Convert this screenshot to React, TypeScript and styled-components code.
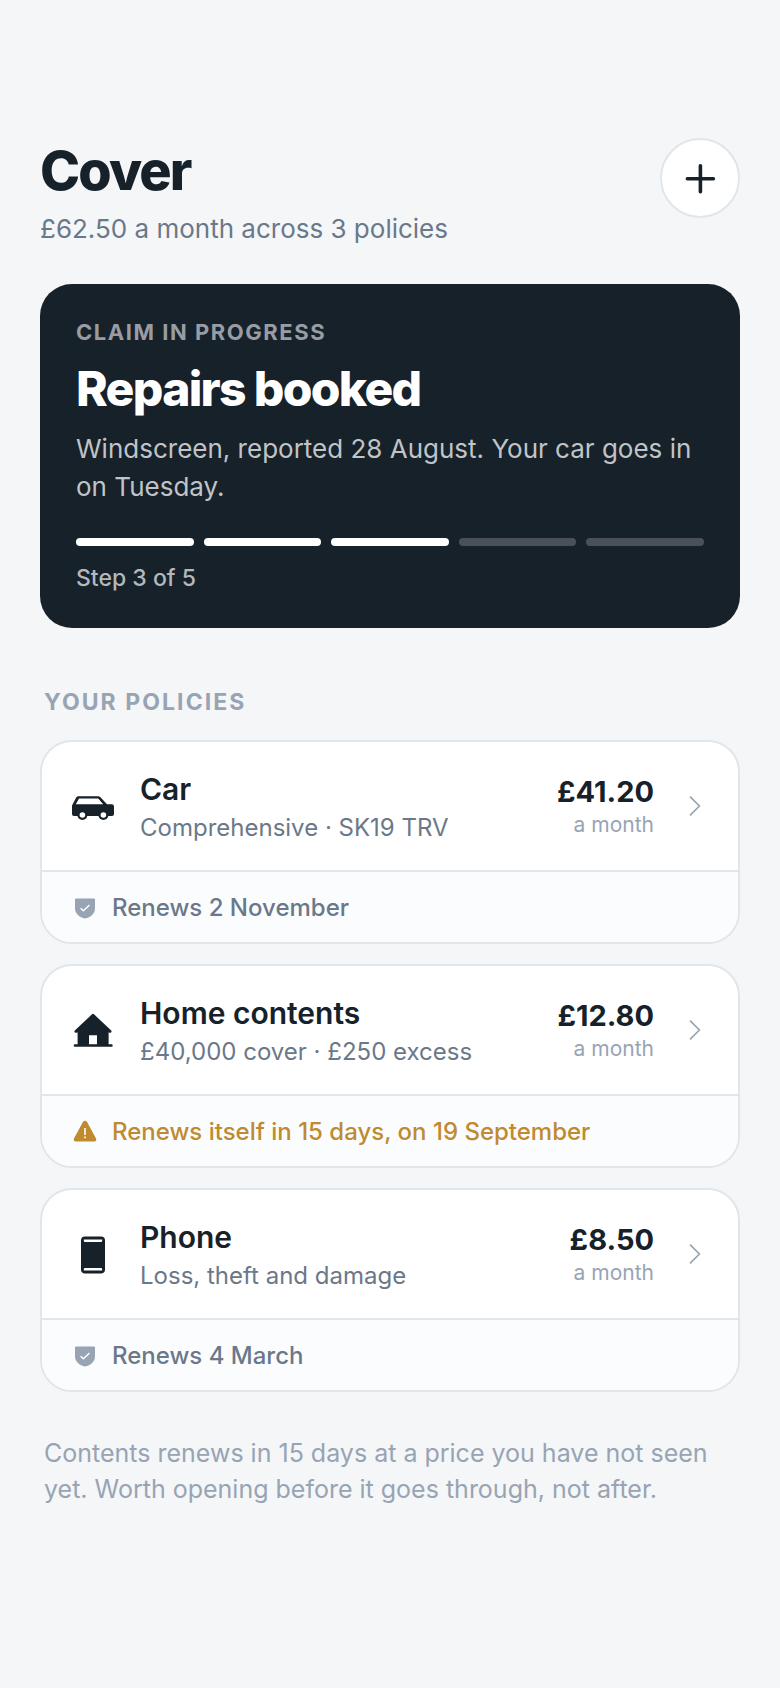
import React from "react";
import styled, { createGlobalStyle } from "styled-components";

const GlobalStyle = createGlobalStyle`
  * {
    box-sizing: border-box;
  }

  body {
    margin: 0;
    background-color: #f4f6f8;
    color: #17212a;
    font-family: Inter, "Liberation Sans", sans-serif;
  }

  h1, h2, h3, p, ul {
    margin: 0;
    padding: 0;
  }
`;

const Page = styled.main`
  min-height: 100vh;
  padding: 138px 40px 80px;
`;

const Header = styled.header`
  display: flex;
  justify-content: space-between;
  align-items: flex-start;
  margin-bottom: 38px;
`;

const HeaderText = styled.div`
  display: flex;
  flex-direction: column;
  gap: 8px;
`;

const Title = styled.h1`
  font-size: 54px;
  line-height: 66px;
  font-weight: 800;
  letter-spacing: -0.035em;
`;

const Subtitle = styled.p`
  color: #6b7889;
  font-size: 26px;
  line-height: 34px;
`;

const AddButton = styled.button`
  display: flex;
  justify-content: center;
  align-items: center;
  width: 80px;
  height: 80px;
  padding: 0;
  border: 2px solid #e0e6ea;
  border-radius: 50%;
  background-color: white;
  color: #17212a;
  cursor: pointer;
`;

const ClaimCard = styled.section`
  display: flex;
  flex-direction: column;
  padding: 36px;
  border-radius: 32px;
  background-color: #17212a;
  color: white;
`;

const ClaimLabel = styled.p`
  color: #989da3;
  font-size: 22px;
  line-height: 24px;
  font-weight: 700;
  letter-spacing: 0.07em;
  text-transform: uppercase;
`;

const ClaimTitle = styled.h2`
  margin-top: 16px;
  font-size: 48px;
  line-height: 58px;
  font-weight: 800;
  letter-spacing: -0.035em;
`;

const ClaimText = styled.p`
  margin-top: 12px;
  color: #c0c4c8;
  font-size: 26px;
  line-height: 38px;
`;

const Steps = styled.div`
  display: flex;
  gap: 10px;
  margin-top: 32px;
`;

const Step = styled.span<{ $done: boolean }>`
  flex: 1;
  height: 8px;
  border-radius: 4px;
  background-color: ${({ $done }) => ($done ? "white" : "#495059")};
`;

const StepText = styled.p`
  margin-top: 18px;
  color: #b3b8bc;
  font-size: 23px;
  line-height: 28px;
  font-weight: 500;
`;

const SectionTitle = styled.h2`
  margin: 60px 4px 24px;
  color: #98a4b3;
  font-size: 23px;
  line-height: 28px;
  font-weight: 700;
  letter-spacing: 0.09em;
  text-transform: uppercase;
`;

const PolicyList = styled.ul`
  display: flex;
  flex-direction: column;
  gap: 20px;
  list-style: none;
`;

const PolicyCard = styled.li`
  overflow: hidden;
  border: 2px solid #e0e6ea;
  border-radius: 32px;
  background-color: white;
`;

const PolicyLink = styled.a`
  display: flex;
  align-items: center;
  min-height: 128px;
  padding: 0 30px 0 28px;
  color: inherit;
  text-decoration: none;
`;

const PolicyText = styled.div`
  flex: 1;
  display: flex;
  flex-direction: column;
  gap: 4px;
  margin-left: 24px;
`;

const PolicyName = styled.h3`
  font-size: 30px;
  line-height: 40px;
  font-weight: 600;
`;

const PolicyDetail = styled.p`
  color: #6b7889;
  font-size: 24px;
  line-height: 30px;
`;

const PriceBlock = styled.div`
  display: flex;
  flex-direction: column;
  gap: 2px;
  margin-right: 26px;
  text-align: right;
`;

const Price = styled.span`
  font-size: 29px;
  line-height: 36px;
  font-weight: 700;
`;

const Period = styled.span`
  color: #98a4b3;
  font-size: 21px;
  line-height: 26px;
`;

const Renewal = styled.div<{ $warning: boolean }>`
  display: flex;
  align-items: center;
  gap: 14px;
  min-height: 72px;
  padding: 2px 30px 0;
  border-top: 2px solid #e0e6ea;
  background-color: #fafcfe;
  color: ${({ $warning }) => ($warning ? "#bf8a30" : "#6b7889")};
  font-size: 24px;
  line-height: 30px;
  font-weight: 500;
`;

const Note = styled.p`
  margin: 43px 4px 0;
  color: #98a4b3;
  font-size: 25px;
  line-height: 36px;
`;

const PlusIcon = () => (
  <svg width="34" height="34" viewBox="0 0 34 34" fill="none" aria-hidden="true">
    <path d="M17.4 4.8v26M4.4 17.8h26" stroke="currentColor" strokeWidth="3.6" strokeLinecap="round" />
  </svg>
);

const CarIcon = () => (
  <svg width="46" height="46" viewBox="0 0 46 46" fill="currentColor" aria-hidden="true">
    <path
      fillRule="evenodd"
      d="M2 22.5 6.2 14.6Q7 13.2 8.4 13.2H28.2Q29.4 13.2 30.2 14L37 21.2H41.8Q44 21.2 44 23.4V31Q44 33 42 33H4Q2 33 2 31ZM9 15.6 5.8 21.2H33.2L28.2 15.6Z"
    />
    <circle cx="12.4" cy="32" r="5" />
    <circle cx="33.4" cy="32" r="5" />
    <circle cx="12.4" cy="32" r="2.8" fill="white" />
    <circle cx="33.4" cy="32" r="2.8" fill="white" />
  </svg>
);

const HouseIcon = () => (
  <svg width="46" height="46" viewBox="0 0 46 46" fill="currentColor" aria-hidden="true">
    <path
      fillRule="evenodd"
      d="M22 7.3Q23 6.4 24 7.3L41.2 23.6Q42 24.6 41 25.5 40 26.3 38.6 25.2V37.3H41.6Q42.7 37.3 42.7 38.5T41.6 39.7H4.8Q3.7 39.7 3.7 38.5T4.8 37.3H7.6V25.2Q6 26.3 5 25.5 4 24.6 4.8 23.6ZM19 28.3V37.3H27V28.3Z"
    />
  </svg>
);

const PhoneIcon = () => (
  <svg width="46" height="46" viewBox="0 0 46 46" fill="currentColor" aria-hidden="true">
    <rect x="11" y="5.6" width="24" height="36.8" rx="4" />
    <path d="M13.8 8.4H32.2V9.8Q32.2 11 31 11H15Q13.8 11 13.8 9.8ZM13.8 39.6H32.2V38.2Q32.2 37 31 37H15Q13.8 37 13.8 38.2Z" fill="white" />
  </svg>
);

const ChevronIcon = () => (
  <svg width="28" height="28" viewBox="0 0 28 28" fill="none" aria-hidden="true">
    <path d="M10 4.6 19.4 14 10 23.4" stroke="#98a4b3" strokeWidth="1.6" />
  </svg>
);

const ShieldIcon = () => (
  <svg width="26" height="26" viewBox="0 0 26 26" fill="none" aria-hidden="true">
    <path d="M4 3.4H22Q23 3.4 23 4.4V13.2C23 18.8 18.6 22 13 23.6 7.4 22 3 18.8 3 13.2V4.4Q3 3.4 4 3.4Z" fill="#98a4b3" />
    <path d="M8.6 13.2 11.4 15.8 17.4 10" stroke="white" strokeWidth="1.5" />
  </svg>
);

const WarningIcon = () => (
  <svg width="26" height="26" viewBox="0 0 26 26" fill="none" aria-hidden="true">
    <path d="M10.8 3.2Q13 0.4 15.2 3.2L23.9 19.3Q25 22.5 22 22.5H4Q1 22.5 2.1 19.3Z" fill="currentColor" />
    <path d="M13 9.1V15.9M13 17.5V19.3" stroke="white" strokeWidth="1.6" />
  </svg>
);

interface Policy {
  name: string;
  detail: string;
  price: string;
  renewal: string;
  warning: boolean;
  icon: React.ReactNode;
}

const policies: Policy[] = [
  {
    name: "Car",
    detail: "Comprehensive · SK19 TRV",
    price: "£41.20",
    renewal: "Renews 2 November",
    warning: false,
    icon: <CarIcon />,
  },
  {
    name: "Home contents",
    detail: "£40,000 cover · £250 excess",
    price: "£12.80",
    renewal: "Renews itself in 15 days, on 19 September",
    warning: true,
    icon: <HouseIcon />,
  },
  {
    name: "Phone",
    detail: "Loss, theft and damage",
    price: "£8.50",
    renewal: "Renews 4 March",
    warning: false,
    icon: <PhoneIcon />,
  },
];

const steps = [1, 2, 3, 4, 5];
const currentStep = 3;

const App = () => {
  return (
    <>
      <GlobalStyle />
      <Page>
        <Header>
          <HeaderText>
            <Title>Cover</Title>
            <Subtitle>£62.50 a month across 3 policies</Subtitle>
          </HeaderText>
          <AddButton type="button" aria-label="Add a policy">
            <PlusIcon />
          </AddButton>
        </Header>

        <ClaimCard>
          <ClaimLabel>Claim in progress</ClaimLabel>
          <ClaimTitle>Repairs booked</ClaimTitle>
          <ClaimText>
            Windscreen, reported 28 August. Your car goes in on Tuesday.
          </ClaimText>
          <Steps aria-hidden="true">
            {steps.map((step) => (
              <Step key={step} $done={step <= currentStep} />
            ))}
          </Steps>
          <StepText>
            Step {currentStep} of {steps.length}
          </StepText>
        </ClaimCard>

        <SectionTitle>Your policies</SectionTitle>
        <PolicyList>
          {policies.map((policy) => (
            <PolicyCard key={policy.name}>
              <PolicyLink href="#">
                {policy.icon}
                <PolicyText>
                  <PolicyName>{policy.name}</PolicyName>
                  <PolicyDetail>{policy.detail}</PolicyDetail>
                </PolicyText>
                <PriceBlock>
                  <Price>{policy.price}</Price>
                  <Period>a month</Period>
                </PriceBlock>
                <ChevronIcon />
              </PolicyLink>
              <Renewal $warning={policy.warning}>
                {policy.warning ? <WarningIcon /> : <ShieldIcon />}
                {policy.renewal}
              </Renewal>
            </PolicyCard>
          ))}
        </PolicyList>

        <Note>
          Contents renews in 15 days at a price you have not seen yet. Worth
          opening before it goes through, not after.
        </Note>
      </Page>
    </>
  );
};

export default App;
